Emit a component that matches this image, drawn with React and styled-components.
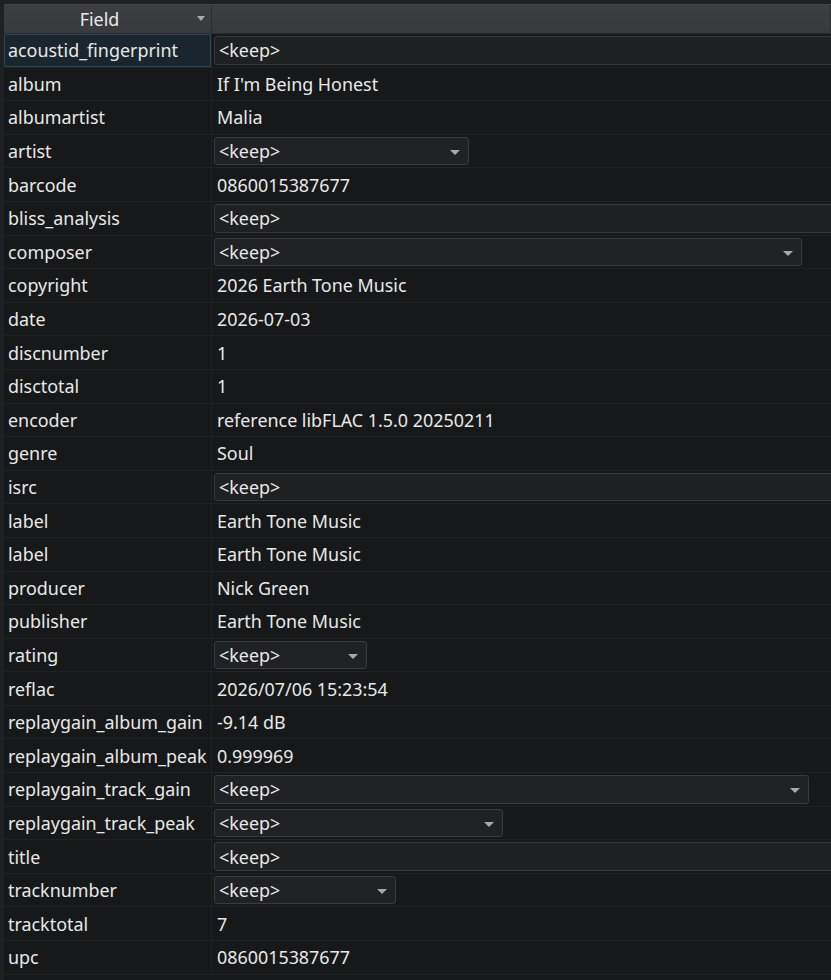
import React from "react";
import styled, { createGlobalStyle } from "styled-components";

const rows = [
  { field: "acoustid_fingerprint", edit: "line", selected: true },
  { field: "album", value: "If I'm Being Honest" },
  { field: "albumartist", value: "Malia" },
  { field: "artist", edit: "combo", width: 255 },
  { field: "barcode", value: "0860015387677" },
  { field: "bliss_analysis", edit: "line" },
  { field: "composer", edit: "combo", width: 588 },
  { field: "copyright", value: "2026 Earth Tone Music" },
  { field: "date", value: "2026-07-03" },
  { field: "discnumber", value: "1" },
  { field: "disctotal", value: "1" },
  { field: "encoder", value: "reference libFLAC 1.5.0 20250211" },
  { field: "genre", value: "Soul" },
  { field: "isrc", edit: "line" },
  { field: "label", value: "Earth Tone Music" },
  { field: "label", value: "Earth Tone Music" },
  { field: "producer", value: "Nick Green" },
  { field: "publisher", value: "Earth Tone Music" },
  { field: "rating", edit: "combo", width: 153 },
  { field: "reflac", value: "2026/07/06 15:23:54" },
  { field: "replaygain_album_gain", value: "-9.14 dB" },
  { field: "replaygain_album_peak", value: "0.999969" },
  { field: "replaygain_track_gain", edit: "combo", width: 595 },
  { field: "replaygain_track_peak", edit: "combo", width: 289 },
  { field: "title", edit: "line" },
  { field: "tracknumber", edit: "combo", width: 182 },
  { field: "tracktotal", value: "7" },
  { field: "upc", value: "0860015387677" },
];

const GlobalStyle = createGlobalStyle`
  html, body {
    margin: 0;
    background: #1f2023;
    height: 100%;
    overflow: hidden;
  }
  body {
    font-family: "Noto Sans", "DejaVu Sans", sans-serif;
    font-size: 17.9px;
    color: #e8e8e8;
  }
`;

const Frame = styled.div`
  padding: 4px 0 0 4px;
  height: 980px;
  box-sizing: border-box;
  overflow: hidden;
`;

const Table = styled.div`
  background: #17181a;
  overflow: hidden;
  height: 100%;
`;

const HeaderRow = styled.div`
  display: grid;
  grid-template-columns: 208px 1fr;
  height: 28px;
  background: linear-gradient(#3d3e42, #393a3e);
  border-bottom: 1px solid #2a2b2e;
  border-top: 1px solid #45464a;
`;

const HeaderCell = styled.div`
  position: relative;
  display: flex;
  align-items: center;
  justify-content: center;
  padding-right: ${(p) => (p.$sorted ? "16px" : "0")};
  border-right: 1px solid #2c2d30;
  color: #eaeaea;
`;

const SortArrow = styled.span`
  position: absolute;
  right: 6px;
  top: 11px;
  width: 0;
  height: 0;
  border-left: 4px solid transparent;
  border-right: 4px solid transparent;
  border-top: 5px solid #a9a9ab;
`;

const Row = styled.div`
  display: grid;
  grid-template-columns: 208px 1fr;
  height: 33.6px;
  box-sizing: border-box;
  border-bottom: 1px solid #212225;
`;

const FieldCell = styled.div`
  display: flex;
  align-items: center;
  padding-left: 4px;
  border-right: 1px solid #212225;
  white-space: nowrap;
  ${(p) =>
    p.$selected &&
    `
    background: #1a262d;
    box-shadow: inset 0 0 0 1px #2c4655;
  `}
`;

const ValueCell = styled.div`
  display: flex;
  align-items: center;
  padding-left: 5px;
  white-space: nowrap;
  min-width: 0;
  ${(p) => p.$editor && `padding: 2px 0 2px 2px;`}
`;

const LineEdit = styled.div`
  display: flex;
  align-items: center;
  flex-shrink: 0;
  box-sizing: border-box;
  height: 100%;
  width: calc(100% + 40px);
  padding-left: 4px;
  background: #1f2022;
  border: 1px solid #37383b;
  border-radius: 3px;
`;

const Combo = styled.div`
  position: relative;
  display: flex;
  align-items: center;
  flex-shrink: 0;
  box-sizing: border-box;
  height: 100%;
  padding-left: 4px;
  background: #202124;
  border: 1px solid #3a3b3e;
  border-radius: 3px;
`;

const ComboArrow = styled.span`
  position: absolute;
  right: 8px;
  top: 12px;
  width: 0;
  height: 0;
  border-left: 5px solid transparent;
  border-right: 5px solid transparent;
  border-top: 5px solid #a8a8aa;
`;

const Editor = ({ row }) => {
  if (row.edit === "line") return <LineEdit>&lt;keep&gt;</LineEdit>;
  return (
    <Combo style={{ width: row.width }}>
      &lt;keep&gt;
      <ComboArrow />
    </Combo>
  );
};

export default function App() {
  return (
    <>
      <GlobalStyle />
      <Frame>
        <Table>
          <HeaderRow>
            <HeaderCell $sorted>
              Field
              <SortArrow />
            </HeaderCell>
            <HeaderCell />
          </HeaderRow>
          {rows.map((row, i) => (
            <Row key={i}>
              <FieldCell $selected={row.selected}>{row.field}</FieldCell>
              <ValueCell $editor={!!row.edit}>
                {row.edit ? <Editor row={row} /> : row.value}
              </ValueCell>
            </Row>
          ))}
        </Table>
      </Frame>
    </>
  );
}
